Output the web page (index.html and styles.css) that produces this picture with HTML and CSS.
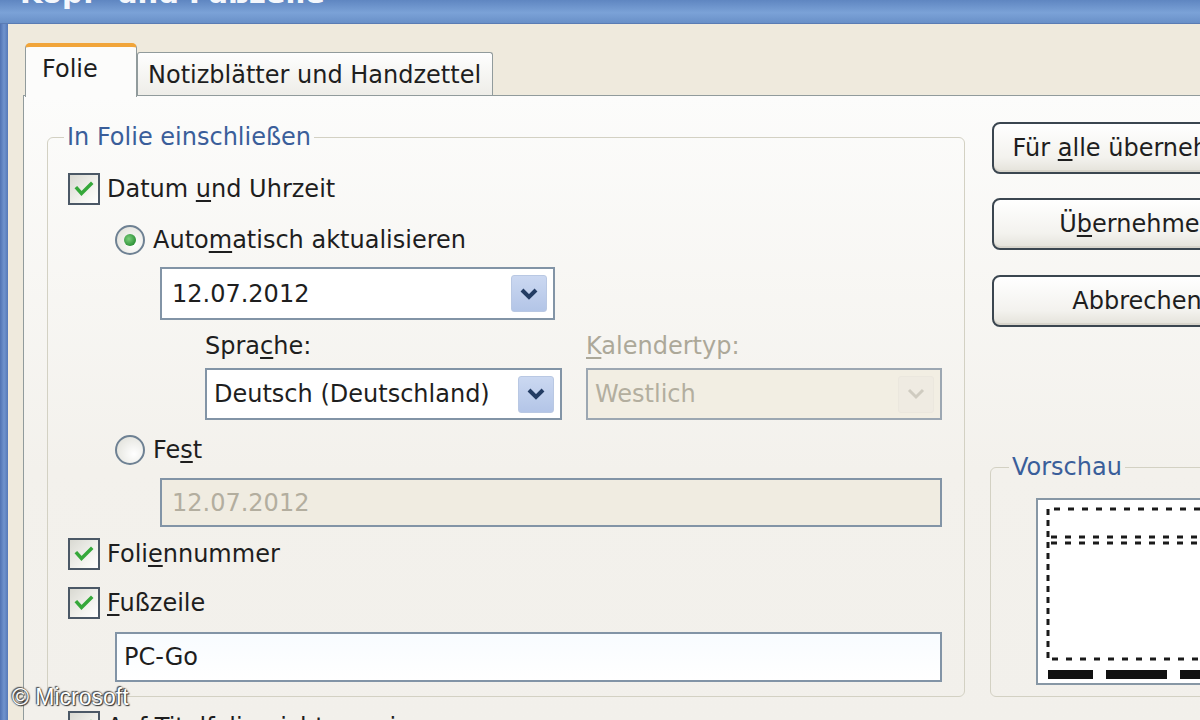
FILE: index.html
```html
<!DOCTYPE html>
<html lang="de">
<head>
<meta charset="utf-8">
<title>Kopf- und Fußzeile</title>
<link rel="stylesheet" href="styles.css">
</head>
<body>
<div class="window">
  <div class="titlebar"><span class="title">Kopf- und Fußzeile</span></div>
  <div class="main">
    <div class="frame-left"></div>
    <div class="dialog">
      <div class="tabs">
        <div class="tab active">Folie</div>
        <div class="tab">Notizblätter und Handzettel</div>
      </div>
      <div class="panel">
        <div class="left-col">
          <fieldset class="group main-group">
            <legend>In Folie einschließen</legend>
            <div class="row check-row r-datum">
              <span class="checkbox"><svg viewBox="0 0 32 32" width="32" height="32"><path d="M9 15.5 L13.5 20.5 L23 11" fill="none" stroke="#35a83a" stroke-width="3.5" stroke-linecap="square"/></svg></span>
              <span>Datum <u>u</u>nd Uhrzeit</span>
            </div>
            <div class="row radio-row r-auto">
              <span class="radio selected"><span class="dot"></span></span>
              <span>Auto<u>m</u>atisch aktualisieren</span>
            </div>
            <div class="combo combo-date">
              <span class="combo-text">12.07.2012</span>
              <span class="drop"><svg viewBox="0 0 20 14" width="20" height="14"><path d="M3 3 L10 10 L17 3" fill="none" stroke="#233c63" stroke-width="4"/></svg></span>
            </div>
            <div class="lang-grid">
              <span class="label">Spra<u>c</u>he:</span>
              <span class="label disabled"><u>K</u>alendertyp:</span>
              <div class="combo combo-lang">
                <span class="combo-text">Deutsch (Deutschland)</span>
                <span class="drop"><svg viewBox="0 0 20 14" width="20" height="14"><path d="M3 3 L10 10 L17 3" fill="none" stroke="#233c63" stroke-width="4"/></svg></span>
              </div>
              <div class="combo combo-lang combo-disabled">
                <span class="combo-text">Westlich</span>
                <span class="drop"><svg viewBox="0 0 20 14" width="20" height="14"><path d="M3 3 L10 10 L17 3" fill="none" stroke="#cfcbc0" stroke-width="3"/></svg></span>
              </div>
            </div>
            <div class="row radio-row r-fest">
              <span class="radio"></span>
              <span>Fe<u>s</u>t</span>
            </div>
            <div class="field field-fest">12.07.2012</div>
            <div class="row check-row r-nummer">
              <span class="checkbox"><svg viewBox="0 0 32 32" width="32" height="32"><path d="M9 15.5 L13.5 20.5 L23 11" fill="none" stroke="#35a83a" stroke-width="3.5" stroke-linecap="square"/></svg></span>
              <span>Foli<u>e</u>nnummer</span>
            </div>
            <div class="row check-row r-fuss">
              <span class="checkbox"><svg viewBox="0 0 32 32" width="32" height="32"><path d="M9 15.5 L13.5 20.5 L23 11" fill="none" stroke="#35a83a" stroke-width="3.5" stroke-linecap="square"/></svg></span>
              <span><u>F</u>ußzeile</span>
            </div>
            <div class="field field-pcgo">PC-Go</div>
          </fieldset>
          <div class="row check-row r-titel">
            <span class="checkbox"><svg viewBox="0 0 32 32" width="32" height="32"><path d="M9 15.5 L13.5 20.5 L23 11" fill="none" stroke="#35a83a" stroke-width="3.5" stroke-linecap="square"/></svg></span>
            <span>Auf <u>T</u>itelfolie nicht anzeigen</span>
          </div>
        </div>
        <div class="right-col">
          <div class="btn"><span>Für <u>a</u>lle übernehmen</span></div>
          <div class="btn"><span>Ü<u>b</u>ernehmen</span></div>
          <div class="btn"><span>Abbrechen</span></div>
          <fieldset class="group preview-group">
            <legend>Vorschau</legend>
            <div class="preview">
              <svg viewBox="0 0 260 183" width="260" height="183">
                <g fill="none" stroke="#1a1a1a" stroke-width="3">
                  <line x1="16" y1="9" x2="260" y2="9" stroke-dasharray="6 8"/>
                  <line x1="10" y1="9" x2="10" y2="160" stroke-dasharray="6 5"/>
                  <line x1="13" y1="37" x2="260" y2="37" stroke-dasharray="6 8"/>
                  <line x1="13" y1="43" x2="260" y2="43" stroke-dasharray="6 8"/>
                  <line x1="14" y1="159" x2="260" y2="159" stroke-dasharray="6 8"/>
                </g>
                <g fill="#111">
                  <rect x="10" y="170" width="45" height="9"/>
                  <rect x="68" y="170" width="61" height="9"/>
                  <rect x="142" y="170" width="61" height="9"/>
                </g>
              </svg>
            </div>
          </fieldset>
        </div>
      </div>
    </div>
  </div>
  <div class="watermark">© Microsoft</div>
</div>
</body>
</html>
```
FILE: styles.css
```css
* { box-sizing: border-box; }
html, body { margin: 0; padding: 0; }
body {
  width: 1200px;
  height: 720px;
  overflow: hidden;
  background: #efeadd;
  font-family: "DejaVu Sans", sans-serif;
  font-size: 24px;
  line-height: 30px;
  color: #1e1e1e;
}
u { text-decoration-thickness: 2px; text-underline-offset: 3px; }

.window {
  position: relative;
  width: 1200px;
  height: 720px;
  display: flex;
  flex-direction: column;
  overflow: hidden;
}
.titlebar {
  height: 24px;
  flex: none;
  overflow: hidden;
  padding-left: 20px;
  background: linear-gradient(#5f86c1, #7ba2d7 55%, #6990c8);
  border-bottom: 1px solid #5a7cb4;
}
.title {
  display: block;
  font-weight: bold;
  font-size: 29px;
  line-height: 32px;
  margin-top: -23px;
  color: #f4f7fc;
}
.main { flex: 1; display: flex; min-height: 0; }
.frame-left {
  width: 8px;
  flex: none;
  background: linear-gradient(90deg, #4f72b2, #6f93cd 50%, #5579b8);
}
.dialog {
  flex: 1;
  min-width: 0;
  display: flex;
  flex-direction: column;
  padding-left: 15px;
  background: #efeadd;
}

/* Tabs */
.tabs {
  flex: none;
  height: 52px;
  margin-top: 19px;
  display: flex;
  align-items: flex-end;
}
.tab {
  height: 43px;
  width: 356px;
  padding: 7px 0 0 10px;
  border: 1px solid #919b9c;
  border-bottom: none;
  border-radius: 3px 3px 0 0;
  background: linear-gradient(#fefefe, #eeede8);
  white-space: nowrap;
}
.tab.active {
  position: relative;
  z-index: 1;
  width: 112px;
  height: 54px;
  margin-left: 2px;
  margin-bottom: -2px;
  padding: 7px 0 0 16px;
  border-top: 4px solid #f1a53a;
  border-radius: 5px 5px 0 0;
  background: #fcfcfb;
}

/* Panel */
.panel {
  flex: 1;
  min-height: 0;
  display: flex;
  padding: 26px 0 0 23px;
  border-top: 1px solid #919b9c;
  border-left: 1px solid #919b9c;
  background: linear-gradient(#fcfcfb, #f3f1ec 60%, #f2f0eb);
}
.left-col { width: 918px; flex: none; }
.right-col {
  width: 300px;
  flex: none;
  margin-left: 27px;
  display: flex;
  flex-direction: column;
}

/* Group boxes */
.group {
  margin: 0;
  border: 1px solid #d3d1c3;
  border-radius: 6px;
  min-width: 0;
}
.group legend {
  padding: 0 3px;
  color: #3a5e9a;
  line-height: 30px;
}
.main-group {
  padding: 0 22px 14px 20px;
}
.main-group legend { margin-left: -4px; }

.row { display: flex; align-items: center; height: 34px; white-space: nowrap; }
.check-row { gap: 7px; }
.radio-row { gap: 8px; padding-left: 47px; }
.r-datum { margin-top: 20px; }
.r-auto { margin-top: 17px; }
.r-fest { margin-top: 13px; }
.r-nummer { margin-top: 10px; }
.r-fuss { margin-top: 15px; }
.r-titel { margin-top: 13px; padding-left: 21px; }

.checkbox {
  width: 32px;
  height: 32px;
  flex: none;
  border: 2px solid #4b5866;
  background: linear-gradient(135deg, #d9d9d2, #f6f6f2 70%, #ffffff);
  display: flex;
  align-items: center;
  justify-content: center;
}
.checkbox svg { display: block; margin: -2px; }

.radio {
  width: 30px;
  height: 30px;
  flex: none;
  border: 2px solid #6e8193;
  border-radius: 50%;
  background: radial-gradient(circle at 65% 65%, #ffffff, #e4e4de 80%);
  display: flex;
  align-items: center;
  justify-content: center;
}
.radio .dot {
  width: 12px;
  height: 12px;
  border-radius: 50%;
  background: radial-gradient(circle at 40% 40%, #7ccf7c, #2a8f35 75%);
}

/* Combos & fields */
.combo {
  display: flex;
  align-items: center;
  justify-content: space-between;
  border: 2px solid #8294a6;
  background: #ffffff;
  white-space: nowrap;
}
.combo-date {
  margin-top: 10px;
  margin-left: 92px;
  width: 395px;
  height: 53px;
  padding: 0 6px 0 10px;
}
.combo-lang { height: 52px; padding: 0 6px 0 7px; }
.drop {
  width: 36px;
  height: 37px;
  border-radius: 3px;
  border: 1px solid #b9c8e3;
  background: linear-gradient(#cbd8f1, #b3c5e7);
  display: flex;
  align-items: center;
  justify-content: center;
}
.drop svg { display: block; }
.combo-disabled {
  background: #f2eee3;
  border-color: #9ca7b2;
  color: #b3ae9f;
}
.combo-disabled .drop {
  background: #efebe2;
  border-color: #ebe7de;
}

.lang-grid {
  margin-top: 11px;
  margin-left: 137px;
  display: grid;
  grid-template-columns: 357px 356px;
  column-gap: 24px;
  row-gap: 7px;
}
.label { line-height: 30px; white-space: nowrap; }
.disabled { color: #aca899; }

.field {
  display: flex;
  align-items: center;
  border: 2px solid #8294a6;
  white-space: nowrap;
}
.field-fest {
  margin-top: 11px;
  margin-left: 92px;
  width: 782px;
  height: 49px;
  padding-left: 10px;
  background: #f0ece1;
  color: #b3ae9f;
}
.field-pcgo {
  margin-top: 12px;
  margin-left: 47px;
  width: 827px;
  height: 50px;
  padding-left: 7px;
  background: linear-gradient(#f8fcff, #ffffff);
}

/* Buttons */
.btn {
  width: 290px;
  height: 52px;
  flex: none;
  border: 2px solid #3b4650;
  border-radius: 8px;
  background: linear-gradient(#ffffff, #f3f2ee 70%, #e4e2da);
  box-shadow: inset 0 -2px 0 #d8d5cc;
  display: flex;
  align-items: center;
  justify-content: center;
  white-space: nowrap;
}
.btn + .btn { margin-top: 24px; }
.btn:nth-child(3) { margin-top: 25px; }

.preview-group {
  margin-top: 125px;
  margin-left: -2px;
  width: 300px;
  padding: 16px 0 11px 45px;
}
.preview-group legend { margin-left: -27px; }
.preview {
  width: 260px;
  height: 187px;
  border: 2px solid #8797a5;
  border-right: none;
  background: #ffffff;
  overflow: hidden;
}
.preview svg { display: block; }

.watermark {
  position: absolute;
  left: 12px;
  top: 683px;
  font-family: "Liberation Sans", Arial, sans-serif;
  font-size: 23px;
  line-height: 28px;
  color: #ffffff;
  text-shadow: 0 0 2px #333, 1px 1px 1px #333, -1px -1px 1px #555;
}
```
